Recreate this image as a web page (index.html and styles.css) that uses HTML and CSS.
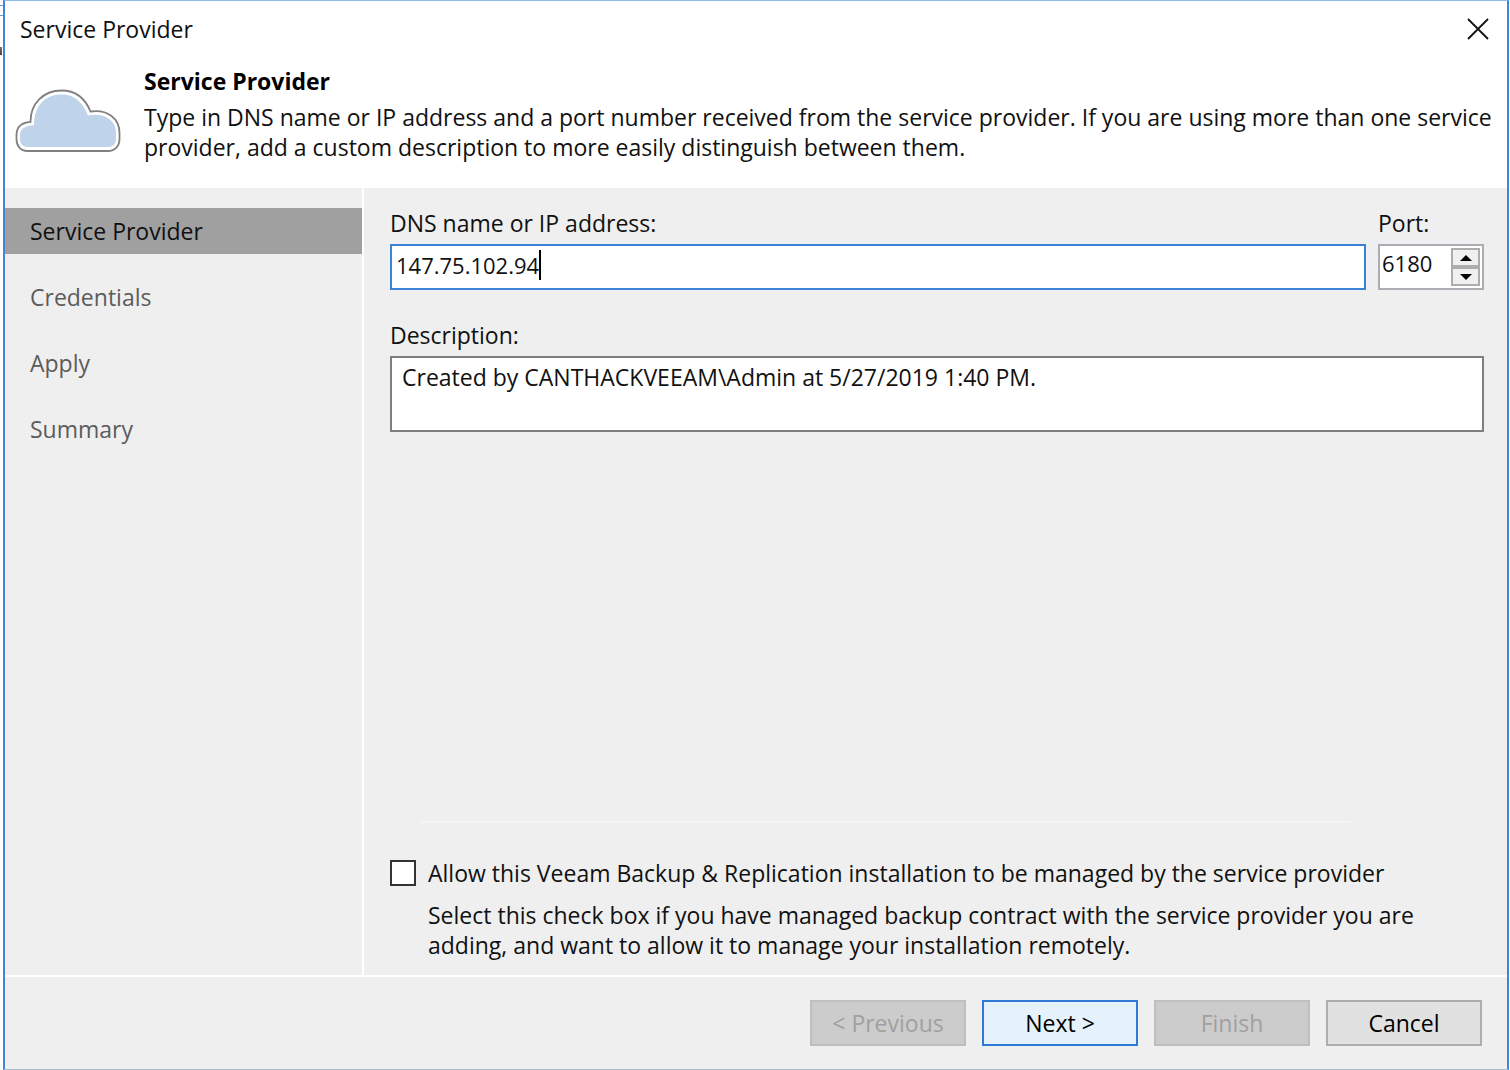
FILE: index.html
```html
<!DOCTYPE html>
<html lang="en">
<head>
<meta charset="utf-8">
<title>Service Provider</title>
<link rel="stylesheet" href="styles.css">
</head>
<body>
<div class="window">
  <header class="header">
    <div class="titlebar">
      <span class="titlebar-text">Service Provider</span>
      <button class="close" type="button" aria-label="Close">
        <svg width="22" height="22" viewBox="0 0 22 22" fill="none" stroke="#111" stroke-width="1.8"><path d="M1 1L21 21M21 1L1 21"/></svg>
      </button>
    </div>
    <div class="intro">
      <svg class="cloud" width="106" height="64" viewBox="0 0 106 64" aria-hidden="true">
        <path d="M12.500 62C5 62 1.500 56.500 1.500 50V46C1.500 37.500 7 33.500 15.500 32.800C15.500 15 28 1.500 46.500 1.500C60 1.500 70 9 75.500 22.500C92 20 104.500 29 104.500 44V50C104.500 57 100 62 93 62Z" fill="#fff" stroke="#808080" stroke-width="1.800"/>
        <path d="M13 58C8 58 5 55 5 50V46C5 39.500 10 37 19 36C19 18 29 5.500 46.500 5.500C59 5.500 67.500 12.500 73 26.500C90 23.500 101 31.500 101 44V50C101 55 98 58 93 58Z" fill="#bfd3eb"/>
      </svg>
      <div>
        <h1 class="heading">Service Provider</h1>
        <p>Type in DNS name or IP address and a port number received from the service provider. If you are using more than one service<br>provider, add a custom description to more easily distinguish between them.</p>
      </div>
    </div>
  </header>
  <div class="body">
    <nav class="steps">
      <a class="step current" href="#provider" aria-current="step">Service Provider</a>
      <a class="step" href="#credentials">Credentials</a>
      <a class="step" href="#apply">Apply</a>
      <a class="step" href="#summary">Summary</a>
    </nav>
    <main class="main">
      <div class="row">
        <div class="field grow">
          <label for="dns">DNS name or IP address:</label>
          <div class="box focused">
            <input id="dns" class="dns" type="text" value="147.75.102.94"><span class="caret"></span>
          </div>
        </div>
        <div class="field port-field">
          <label for="port">Port:</label>
          <div class="box port-box">
            <input id="port" class="port" type="text" inputmode="numeric" value="6180">
            <div class="spinner">
              <button type="button" aria-label="Increase port"><svg width="12" height="6" viewBox="0 0 12 6"><path d="M6 0L12 6H0Z"/></svg></button>
              <button type="button" aria-label="Decrease port"><svg width="12" height="6" viewBox="0 0 12 6"><path d="M0 0H12L6 6Z"/></svg></button>
            </div>
          </div>
        </div>
      </div>
      <div class="field">
        <label for="description">Description:</label>
        <textarea id="description" class="description">Created by CANTHACKVEEAM\Admin at 5/27/2019 1:40 PM.</textarea>
      </div>
      <div class="managed">
        <div class="option">
          <input id="managed" class="check" type="checkbox">
          <label for="managed">Allow this Veeam Backup &amp; Replication installation to be managed by the service provider</label>
        </div>
        <p class="note">Select this check box if you have managed backup contract with the service provider you are<br>adding, and want to allow it to manage your installation remotely.</p>
      </div>
    </main>
  </div>
  <footer class="footer">
    <button class="btn" type="button" disabled>&lt; Previous</button>
    <button class="btn primary" type="button">Next &gt;</button>
    <button class="btn" type="button" disabled>Finish</button>
    <button class="btn" type="button">Cancel</button>
  </footer>
</div>
</body>
</html>
```

FILE: styles.css
```css
* { box-sizing: border-box; }

/* A thin strip of the window behind shows at the left edge. */
body {
  margin: 0;
  padding: 0 1px 0 3px;
  background:
    linear-gradient(#5b9be0, #5b9be0) 0 5px / 3px 1px no-repeat,
    linear-gradient(#5b9be0, #5b9be0) 0 15px / 3px 1px no-repeat,
    linear-gradient(#8a6a5c, #444) 0 47px / 2px 8px no-repeat,
    #fff;
  color: #111;
  font: 23px/30px "Open Sans", "Noto Sans", sans-serif;
}

input, button, textarea {
  margin: 0;
  padding: 0;
  border: 0;
  border-radius: 0;
  outline: 0;
  background: none;
  color: inherit;
  font: inherit;
}

h1, p { margin: 0; }

.window {
  display: flex;
  flex-direction: column;
  min-height: 100vh;
  border: 2px solid #4386d8;
  border-top: 1px solid #90bbea;
  border-bottom: 1px solid #a9bfd2;
  background: #efefef;
}

.header {
  min-height: 187px;
  background: #fff;
}

.titlebar {
  display: flex;
  justify-content: space-between;
  align-items: center;
  height: 56px;
  padding: 0 18px 0 15px;
}

.close { display: flex; }

.intro {
  display: flex;
  gap: 23px;
  padding: 9px 8px 0 10px;
}

.cloud {
  flex: none;
  margin-top: 23px;
}

.heading {
  margin-bottom: 6px;
  color: #000;
  font-size: 23px;
  font-weight: 700;
}

.body {
  display: flex;
  flex: 1;
}

.steps {
  display: flex;
  flex: none;
  flex-direction: column;
  gap: 20px;
  width: 359px;
  padding-top: 20px;
  border-right: 2px solid #fff;
}

.step {
  padding: 8px 25px;
  color: #5c5c5c;
  text-decoration: none;
}

.current {
  background: #a0a0a0;
  color: #111;
}

.main {
  display: flex;
  flex: 1;
  flex-direction: column;
  gap: 30px;
  padding: 20px 23px 15px 26px;
}

.row {
  display: flex;
  gap: 12px;
}

.field {
  display: flex;
  flex-direction: column;
  gap: 6px;
}

.grow { flex: 1; }

.port-field { width: 106px; }

.box {
  display: flex;
  height: 46px;
  border: 2px solid #acadb2;
  background: #fff;
  font-size: 22px;
}

.focused {
  padding: 4px;
  border-color: #3c82d6;
}

.dns {
  field-sizing: content;
  height: 30px;
}

.caret {
  width: 2px;
  height: 30px;
  background: #000;
}

.port-box {
  justify-content: space-between;
  padding: 2px;
}

.port {
  width: 60px;
  height: 30px;
}

.spinner {
  display: flex;
  flex-direction: column;
  width: 29px;
  height: 38px;
}

.spinner button {
  display: flex;
  flex: 1;
  justify-content: center;
  align-items: center;
  border: 2px solid #adadad;
  background: #f0f0f0;
}

.description {
  height: 76px;
  padding: 4px 10px;
  border: 2px solid #7f7f7f;
  background: #fff;
  resize: none;
}

.managed { margin-top: auto; }

.managed::before {
  content: "";
  display: block;
  height: 2px;
  margin: 0 134px 35px 30px;
  background: #f4f4f4;
}

.option {
  display: flex;
  align-items: center;
  gap: 12px;
  margin-bottom: 12px;
}

.check {
  width: 26px;
  height: 26px;
  border: 2px solid #333;
  background: #fff;
  appearance: none;
}

.check:checked { background: #333; }

.note { padding-left: 38px; }

.footer {
  display: flex;
  justify-content: flex-end;
  gap: 16px;
  padding: 23px 25px;
  border-top: 2px solid #fff;
}

.btn {
  width: 156px;
  height: 46px;
  border: 2px solid #adadad;
  background: #e1e1e1;
  color: #000;
}

.btn:disabled {
  border-color: #bfbfbf;
  background: #cccccc;
  color: #a0a0a0;
}

.primary {
  border-color: #3079d6;
  background: #e5f1fb;
}
```
